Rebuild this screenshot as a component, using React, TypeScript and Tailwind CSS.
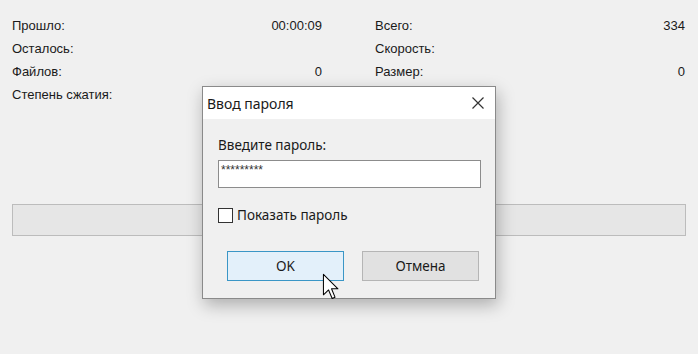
import React, { useState } from 'react';

const leftRows = [
  { label: 'Прошло:', value: '00:00:09' },
  { label: 'Осталось:', value: '' },
  { label: 'Файлов:', value: '0' },
  { label: 'Степень сжатия:', value: '' },
];

const rightRows = [
  { label: 'Всего:', value: '334' },
  { label: 'Скорость:', value: '' },
  { label: 'Размер:', value: '0' },
  { label: 'Сжатие:', value: '' },
];

function StatColumn({ rows }: { rows: { label: string; value: string }[] }) {
  return (
    <div className="flex flex-col">
      {rows.map(r => (
        <div key={r.label} className="flex h-[23px] items-center justify-between">
          <span>{r.label}</span>
          <span>{r.value}</span>
        </div>
      ))}
    </div>
  );
}

function Cursor() {
  return (
    <svg
      className="absolute left-[322px] top-[273px]"
      width="17"
      height="27"
      viewBox="0 0 13 21"
    >
      <path
        d="M1 1 L1 17 L5 13.2 L7.8 19.8 L10 18.8 L7.3 12.3 L12.3 12.3 Z"
        fill="#ffffff"
        stroke="#000000"
        strokeWidth="0.8"
        strokeLinejoin="round"
      />
    </svg>
  );
}

function PasswordDialog() {
  const [show, setShow] = useState(false);
  const password = '123456789';

  return (
    <div className="absolute left-[202px] top-[86px] flex h-[213px] w-[294px] flex-col border border-[#8a8a8a] bg-[#f0f0f0] shadow-[2px_6px_16px_rgba(0,0,0,0.28)] font-['Noto_Sans',sans-serif] text-[#1a1a1a]">
      <div className="flex h-[32px] items-center justify-between bg-white pl-[4px] pr-[10px]">
        <span className="text-[14px]">Ввод пароля</span>
        <svg width="14" height="14" viewBox="0 0 14 14" className="text-[#333]">
          <path d="M1.5 1.5 L12.5 12.5 M12.5 1.5 L1.5 12.5" stroke="currentColor" strokeWidth="1.2" />
        </svg>
      </div>

      <div className="flex flex-col px-[15px] pt-[17px]">
        <span className="text-[13.5px] leading-[18px]">Введите пароль:</span>
        <div className="mt-[6px] h-[28px] w-[263px] border border-[#8c8c8c] bg-white px-[2px] pt-[2px] font-['Liberation_Sans',Arial,sans-serif] text-[12px] leading-[14px] text-[#333]">
          {show ? password : '*'.repeat(password.length)}
        </div>

        <label className="mt-[19px] flex items-center gap-[4px] text-[13.5px] leading-[16px]">
          <input
            type="checkbox"
            checked={show}
            onChange={e => setShow(e.target.checked)}
            className="h-[15px] w-[15px] appearance-none border border-[#333] bg-white"
          />
          Показать пароль
        </label>

        <div className="mt-[28px] flex gap-[18px] pl-[9px]">
          <button className="h-[30px] w-[117px] border border-[#3a96c6] bg-[#e3f0fa] text-[13.5px]">
            OK
          </button>
          <button className="h-[30px] w-[117px] border border-[#b5b5b5] bg-[#e1e1e1] text-[13.5px]">
            Отмена
          </button>
        </div>
      </div>
    </div>
  );
}

export default function App() {
  return (
    <div className="relative h-[354px] w-[698px] overflow-hidden bg-[#f0f0f0] font-['Liberation_Sans',Arial,sans-serif] text-[13px] text-[#1a1a1a]">
      <div className="grid grid-cols-[310px_310px] gap-x-[53px] pl-[12px] pt-[14px]">
        <StatColumn rows={leftRows} />
        <StatColumn rows={rightRows} />
      </div>

      <div className="ml-[12px] mt-[98px] h-[32px] w-[674px] border border-[#bcbcbc] bg-[#e6e6e6]" />

      <PasswordDialog />
      <Cursor />
    </div>
  );
}
